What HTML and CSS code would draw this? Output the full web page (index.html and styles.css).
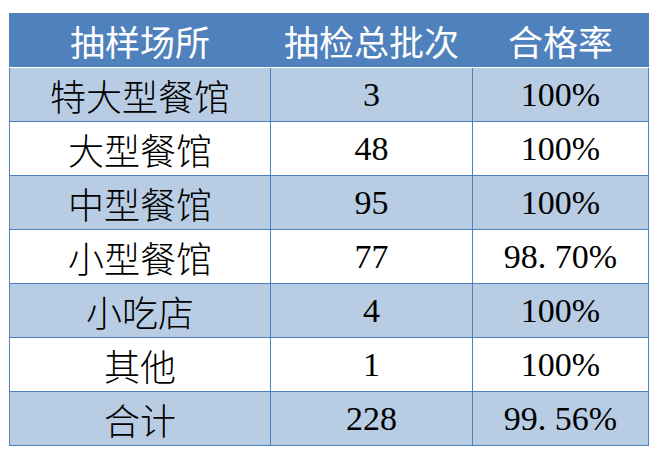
FILE: index.html
```html
<!DOCTYPE html>
<html lang="zh-CN">
<head>
<meta charset="utf-8">
<title>抽样场所</title>
<link rel="stylesheet" href="styles.css">
</head>
<body>
<table class="stats">
  <colgroup>
    <col class="c1"><col class="c2"><col class="c3">
  </colgroup>
  <thead>
    <tr><th>抽样场所</th><th>抽检总批次</th><th>合格率</th></tr>
  </thead>
  <tbody>
    <tr class="band"><td class="name">特大型餐馆</td><td class="num">3</td><td class="num">100%</td></tr>
    <tr><td class="name">大型餐馆</td><td class="num">48</td><td class="num">100%</td></tr>
    <tr class="band"><td class="name">中型餐馆</td><td class="num">95</td><td class="num">100%</td></tr>
    <tr><td class="name">小型餐馆</td><td class="num">77</td><td class="num">98. 70%</td></tr>
    <tr class="band"><td class="name">小吃店</td><td class="num">4</td><td class="num">100%</td></tr>
    <tr><td class="name">其他</td><td class="num">1</td><td class="num">100%</td></tr>
    <tr class="band"><td class="name">合计</td><td class="num">228</td><td class="num">99. 56%</td></tr>
  </tbody>
</table>
</body>
</html>
```

FILE: styles.css
```css
html, body {
  margin: 0;
  padding: 0;
  background: #ffffff;
}

.stats {
  border-collapse: collapse;
  table-layout: fixed;
  width: 639px;
  margin: 13px 0 0 9px;
}

.c1 { width: 261px; }
.c2 { width: 202px; }
.c3 { width: 176px; }

.stats th,
.stats td {
  height: 53px;
  padding: 0;
  text-align: center;
  vertical-align: middle;
  border: 1px solid #4f81bd;
  white-space: nowrap;
}

.stats th {
  background: #4f81bd;
  color: #ffffff;
  font-family: "Noto Sans CJK SC", sans-serif;
  font-weight: 400;
  font-size: 35px;
  border-bottom: 1px solid #ffffff;
}

.stats td {
  background: #ffffff;
  color: #000000;
}

.stats .name {
  font-family: "Noto Sans CJK SC", sans-serif;
  font-weight: 300;
  font-size: 36px;
}

.stats .num {
  font-family: "Liberation Serif", "Times New Roman", serif;
  font-weight: 400;
  font-size: 34px;
}

.stats .band td {
  background: #b8cce4;
}
```
